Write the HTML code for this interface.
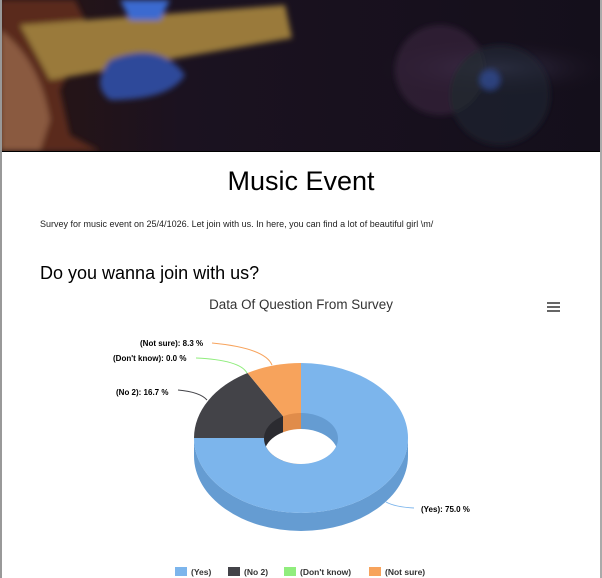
<!DOCTYPE html>
<html><head><meta charset="utf-8"><style>
body{margin:0;width:602px;height:578px;overflow:hidden;background:#fff;font-family:"Liberation Sans",sans-serif;position:relative}
.bl{position:absolute;left:0;top:0;width:2px;height:578px;background:#999}
.br{position:absolute;right:0;top:0;width:2px;height:578px;background:#aaa}
</style></head><body>
<svg width="602" height="578" style="position:absolute;left:0;top:0">
<defs>
<radialGradient id="f1" cx="0.82" cy="0.45" r="0.2"><stop offset="0" stop-color="#3a3550"/><stop offset="1" stop-color="#17101c" stop-opacity="0"/></radialGradient>
<linearGradient id="bg" x1="0" x2="1"><stop offset="0" stop-color="#2a1512"/><stop offset="0.3" stop-color="#1b1220"/><stop offset="1" stop-color="#140f1b"/></linearGradient>
<filter id="bl"><feGaussianBlur stdDeviation="3"/></filter>
<clipPath id="ban"><rect x="0" y="0" width="602" height="151"/></clipPath>
<clipPath id="hole"><ellipse cx="301" cy="438.5" rx="37" ry="25.5"/></clipPath>
</defs>
<g clip-path="url(#ban)">
<rect x="0" y="0" width="602" height="151" fill="url(#bg)"/>
<rect x="0" y="0" width="602" height="151" fill="url(#f1)"/>
<g filter="url(#bl)">
<path d="M0,0 L75,0 L90,30 L60,90 L70,135 L100,151 L0,151Z" fill="#5a2a1a"/>
<path d="M20,25 L285,5 L292,38 L50,80Z" fill="#9a7a3a"/>
<path d="M120,0 L170,0 L160,20 L130,20Z" fill="#3a6ad0"/>
<path d="M110,60 Q160,40 185,75 Q170,100 110,100 Q90,85 110,60Z" fill="#2f4a9a"/>
<path d="M0,30 Q40,60 50,120 L40,151 L0,151Z" fill="#8a5a40"/>
<circle cx="440" cy="70" r="45" fill="#3a2a40" opacity="0.6"/>
<circle cx="500" cy="95" r="50" fill="#1c2a30" opacity="0.6"/>
<circle cx="490" cy="80" r="10" fill="#3050a0" opacity="0.7"/>
</g>
</g>
<rect x="0" y="151" width="602" height="1" fill="#000"/>

<text x="301" y="190" font-size="27" text-anchor="middle" fill="#000">Music Event</text>
<text x="40" y="227" font-size="9" fill="#222">Survey for music event on 25/4/1026. Let join with us. In here, you can find a lot of beautiful girl \m/</text>
<text x="40" y="279" font-size="18" fill="#000">Do you wanna join with us?</text>
<text x="301" y="309" font-size="13.4" text-anchor="middle" fill="#333">Data Of Question From Survey</text>
<rect x="547" y="302" width="13" height="2" fill="#666"/><rect x="547" y="306" width="13" height="2" fill="#666"/><rect x="547" y="310" width="13" height="2" fill="#666"/>

<path d="M408,438 A107,75 0 0,1 194,438 L194,456 A107,75 0 0,0 408,456Z" fill="#659cd2"/>
<path d="M301,438 L301,363 A107,75 0 1,1 194,438Z" fill="#7cb5ec"/>
<path d="M301,438 L194,438 A107,75 0 0,1 247.5,373Z" fill="#434348"/>
<path d="M301,438 L247.5,373 A107,75 0 0,1 301,363Z" fill="#f7a35c"/>
<g clip-path="url(#hole)">
<rect x="260" y="410" width="23" height="60" fill="#2b2b30"/>
<rect x="283" y="410" width="18" height="60" fill="#e08c4a"/>
<rect x="301" y="410" width="40" height="60" fill="#659cd2"/>
<ellipse cx="301" cy="454.5" rx="37" ry="25.5" fill="#fff"/>
</g>

<g font-size="8" font-weight="bold" fill="#000">
<text x="140" y="346">(Not sure): 8.3 %</text>
<text x="113" y="361">(Don't know): 0.0 %</text>
<text x="116" y="395">(No 2): 16.7 %</text>
<text x="421" y="512">(Yes): 75.0 %</text>
</g>
<path d="M212,343 Q265,348 272,365" stroke="#f7a35c" fill="none"/>
<path d="M196,358 Q240,360 247,373" stroke="#90ed7d" fill="none"/>
<path d="M178,390 Q200,392 207,400" stroke="#434348" fill="none"/>
<path d="M414,508 Q395,507 386,502" stroke="#7cb5ec" fill="none"/>

<g font-size="8.5" font-weight="bold" fill="#333">
<rect x="175" y="567" width="12" height="9" fill="#7cb5ec"/><text x="191" y="575">(Yes)</text>
<rect x="228" y="567" width="12" height="9" fill="#434348"/><text x="244" y="575">(No 2)</text>
<rect x="284" y="567" width="12" height="9" fill="#90ed7d"/><text x="300" y="575">(Don't know)</text>
<rect x="369" y="567" width="12" height="9" fill="#f7a35c"/><text x="385" y="575">(Not sure)</text>
</g>
</svg>
<div class="bl"></div><div class="br"></div>
</body></html>
